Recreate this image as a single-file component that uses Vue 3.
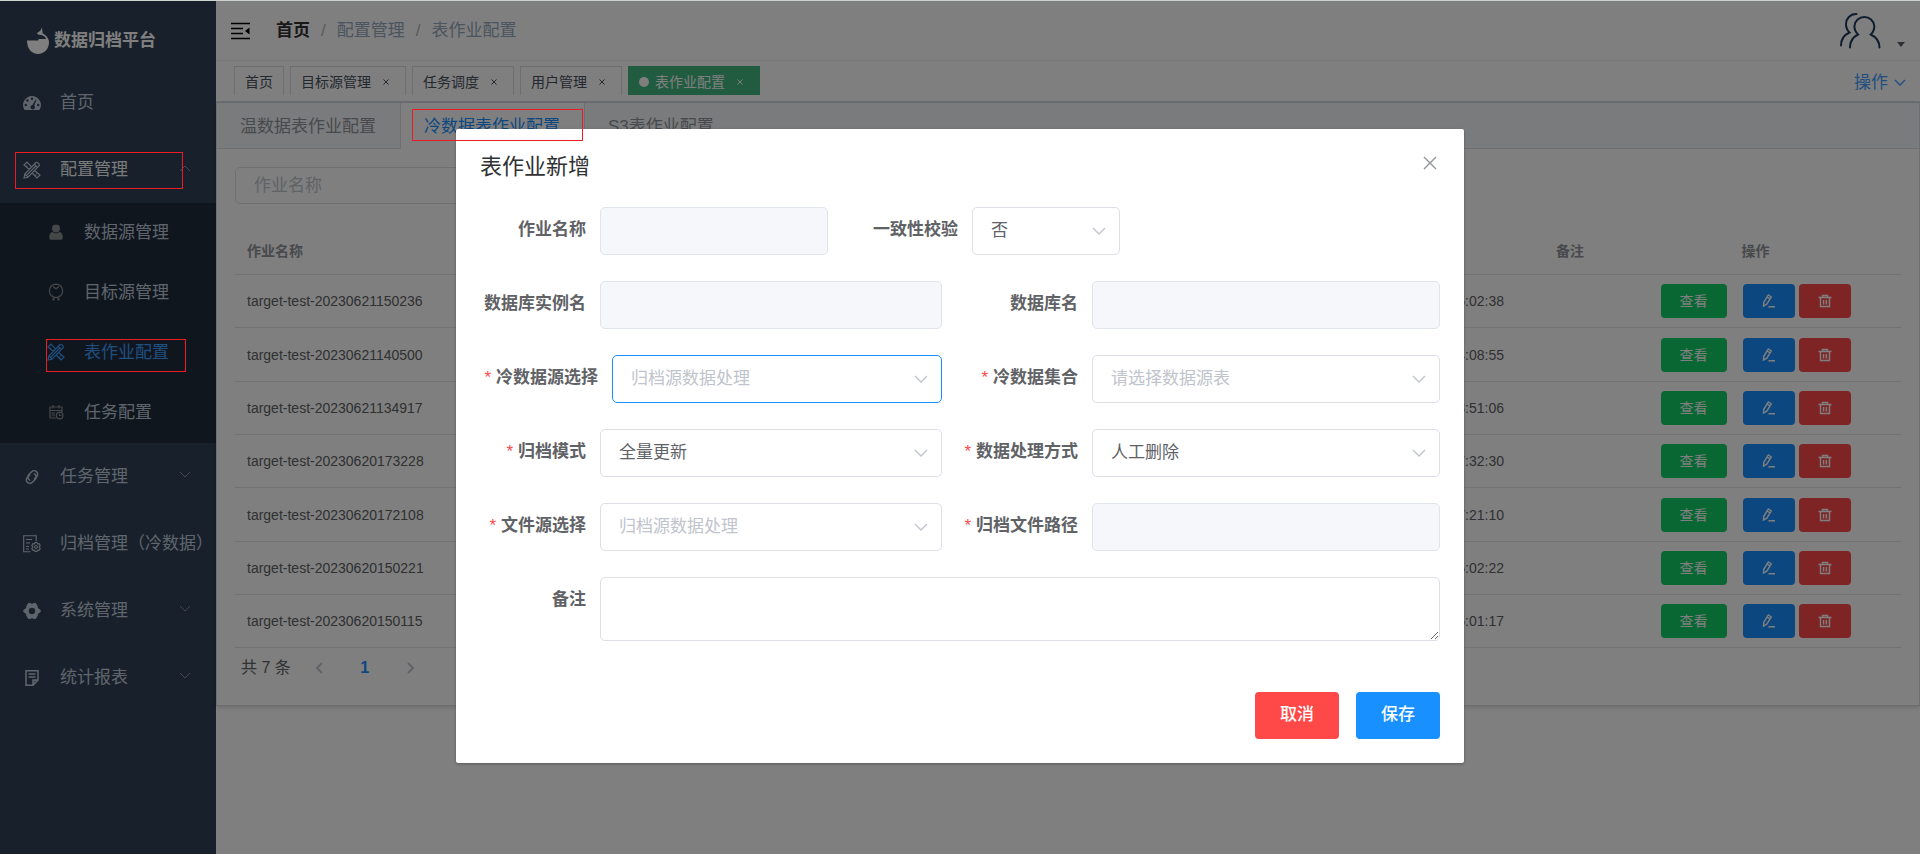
<script setup>
import { ref } from 'vue'

const tags = [
  { name: '首页', closable: false },
  { name: '目标源管理', closable: true },
  { name: '任务调度', closable: true },
  { name: '用户管理', closable: true },
  { name: '表作业配置', closable: true, active: true },
]

const tabs = ['温数据表作业配置', '冷数据表作业配置', 'S3表作业配置']
const activeTab = ref(1)

const rows = [
  { name: 'target-test-20230621150236', time: '2023-06-21 15:02:38' },
  { name: 'target-test-20230621140500', time: '2023-06-21 14:08:55' },
  { name: 'target-test-20230621134917', time: '2023-06-21 13:51:06' },
  { name: 'target-test-20230620173228', time: '2023-06-20 17:32:30' },
  { name: 'target-test-20230620172108', time: '2023-06-20 17:21:10' },
  { name: 'target-test-20230620150221', time: '2023-06-20 15:02:22' },
  { name: 'target-test-20230620150115', time: '2023-06-20 15:01:17' },
]

const form = ref({
  name: '',
  check: 'no',
  instance: '',
  database: '',
  source: '',
  collection: '',
  mode: 'full',
  handle: 'manual',
  file: '',
  path: '',
  remark: '',
})
</script>

<template>
  <div class="page">
    <div class="strip"></div>
    <div class="shell">
      <aside class="sidebar">
        <div class="logo">
          <svg width="24" height="28" viewBox="0 0 24 28" aria-hidden="true">
            <path d="M1 13.500h11.500v-1.500h7.500l-1-3.500c2.700 1.500 4 4 4 7C23 22 18 27 12 27S1 22 1 13.500z" fill="currentColor" />
            <path d="M11 6.500c1.500-2 3-1.500 4.500-5l.5-1 .7 6c2.500.8 5 3.500 5.300 7.500-2-4-5-6-8-6.200-1.500 0-2.300-.3-3-1.300z" fill="currentColor" />
          </svg>
          <span>数据归档平台</span>
        </div>
        <nav>
          <a class="item" href="#home">
            <svg class="icon" viewBox="0 0 18 18" aria-hidden="true">
              <path fill="currentColor" fill-rule="evenodd" d="M9 2a9 9 0 0 0-7.900 13.200c.3.500.6.800 1.200.8h13.400c.6 0 .9-.3 1.200-.8A9 9 0 0 0 9 2zm0 1.500a1.200 1.200 0 1 1 0 2.400 1.200 1.200 0 0 1 0-2.400zM4.500 5.300a1.200 1.200 0 1 1 0 2.400 1.200 1.200 0 0 1 0-2.400zM2.800 9.800a1.200 1.200 0 1 1 0 2.400 1.200 1.200 0 0 1 0-2.400zm12.400 0a1.200 1.200 0 1 1 0 2.400 1.200 1.200 0 0 1 0-2.400zM12.700 5.600l.8.400-2.300 5.600a2.200 2.200 0 1 1-1.700-.6z" />
            </svg>
            <span>首页</span>
          </a>
          <a class="item open" href="#config">
            <svg class="icon" viewBox="0 0 18 18" aria-hidden="true">
              <path fill="none" stroke="currentColor" stroke-width="1.200" d="M6.500 8.500 1 4l3-3 4.800 5.200M11.500 9.500 17 14l-3 3-4.800-5M3 6l1.200-1.200M12 14.800l1.200-1.200M14.500 11.500l-1.200 1.200M1 17l.8-4L13 1.500c1-1 4 2 3.200 3.200L5 16.200zM11.300 3.200l3.400 3.400M3.600 14.300 12.800 5M1.800 13.200 5 16" />
            </svg>
            <span>配置管理</span>
            <svg class="arrow" viewBox="0 0 12 12" aria-hidden="true"><path d="M1 9l5-5 5 5" /></svg>
          </a>
          <div class="sub">
            <a class="subitem" href="#datasource">
              <svg class="icon" viewBox="0 0 18 18" aria-hidden="true">
                <circle cx="9" cy="5.500" r="4" fill="currentColor" />
                <path fill="currentColor" d="M5.500 9c2 1.800 5 1.800 7 0 2 .6 3.200 2 3.200 4.500V15c0 1-.7 1.700-1.700 1.700H4c-1 0-1.700-.7-1.700-1.700v-1.500C2.300 11 3.500 9.600 5.500 9z" />
              </svg>
              <span>数据源管理</span>
            </a>
            <a class="subitem" href="#target">
              <svg class="icon" viewBox="0 0 18 18" aria-hidden="true">
                <path fill="none" stroke="currentColor" stroke-width="1.200" d="M9 1.200a6.700 6.700 0 0 1 2.800 12.700c-1.700.7-3.900.7-5.600 0A6.700 6.700 0 0 1 9 1.200zM6 3.500l3 2.300 3-2.300M7.300 14l-1.300 3.500M5.300 16l2.300 1M10.700 14l1.300 3.500M12.700 16l-2.300 1" />
              </svg>
              <span>目标源管理</span>
            </a>
            <a class="subitem current" href="#job">
              <svg class="icon" viewBox="0 0 18 18" aria-hidden="true">
                <path fill="none" stroke="currentColor" stroke-width="1.200" d="M6.500 8.500 1 4l3-3 4.800 5.200M11.500 9.500 17 14l-3 3-4.800-5M3 6l1.200-1.200M12 14.800l1.200-1.200M14.500 11.500l-1.200 1.200M1 17l.8-4L13 1.500c1-1 4 2 3.200 3.200L5 16.200zM11.300 3.200l3.400 3.400M3.600 14.300 12.800 5M1.800 13.200 5 16" />
              </svg>
              <span>表作业配置</span>
            </a>
            <a class="subitem" href="#task">
              <svg class="icon" viewBox="0 0 18 18" aria-hidden="true">
                <path fill="none" stroke="currentColor" stroke-width="1.200" d="M9 15H3V4h12v5M3 7.500h12M6 2v3.500M12 2v3.500M12.500 10.500v2h2" />
                <circle cx="12.700" cy="12.500" r="3.300" fill="none" stroke="currentColor" stroke-width="1.200" />
                <path fill="currentColor" opacity=".5" d="M4.500 9H8v4.500H4.500z" />
              </svg>
              <span>任务配置</span>
            </a>
          </div>
          <a class="item" href="#tasks">
            <svg class="icon" viewBox="0 0 18 18" aria-hidden="true">
              <g transform="rotate(-45 9 9)">
                <path fill="none" stroke="currentColor" stroke-width="1.500" stroke-linecap="round" d="M8.500 6h-3a3.500 3.500 0 0 0 0 7h4a3.500 3.500 0 0 0 3.300-4.500M9.500 12h3a3.500 3.500 0 0 0 0-7h-4a3.500 3.500 0 0 0-3.300 4.500" />
              </g>
            </svg>
            <span>任务管理</span>
            <svg class="arrow" viewBox="0 0 12 12" aria-hidden="true"><path d="M1 3l5 5 5-5" /></svg>
          </a>
          <a class="item" href="#archive">
            <svg class="icon" viewBox="0 0 18 18" aria-hidden="true">
              <path fill="none" stroke="currentColor" stroke-width="1.100" d="M7.500 16.800H.7V.7h12.500v5.500M3 4.500h6M3 8h4M3 11.500h3M3 14h3" />
              <path fill="none" stroke="currentColor" stroke-width="1.100" d="M12 7.500h2l.5 1.500 1.700-.3 1 1.800-1 1.500 1 1.500-1 1.800-1.700-.3L14 16.500h-2l-.5-1.500-1.700.3-1-1.800 1-1.500-1-1.500 1-1.800 1.700.3z" />
              <circle cx="13" cy="12" r="1.500" fill="none" stroke="currentColor" />
            </svg>
            <span>归档管理（冷数据）</span>
          </a>
          <a class="item" href="#system">
            <svg class="icon" viewBox="0 0 18 18" aria-hidden="true">
              <path fill="currentColor" fill-rule="evenodd" d="M5.300 1h2l1.700 1L10.700 1h2l2 3.200.1 1.800L17 7.500 18 9l-1 1.500-2.200 1.500-.1 1.800-2 3.200h-2L9 16l-1.700 1h-2l-2-3.200-.1-1.800L1 10.500 0 9l1-1.500L3.200 6l.1-1.800zM9 5.800a3.200 3.200 0 1 0 0 6.400 3.200 3.200 0 0 0 0-6.400z" />
            </svg>
            <span>系统管理</span>
            <svg class="arrow" viewBox="0 0 12 12" aria-hidden="true"><path d="M1 3l5 5 5-5" /></svg>
          </a>
          <a class="item" href="#report">
            <svg class="icon" viewBox="0 0 18 18" aria-hidden="true">
              <path fill="none" stroke="currentColor" stroke-width="1.500" d="M3 1.800h12V11l-5 5.300H3zM5.500 5h7M5.500 8h7M10 16v-5h5" />
              <path fill="currentColor" d="M10 11h5l-5 5z" opacity=".5" />
            </svg>
            <span>统计报表</span>
            <svg class="arrow" viewBox="0 0 12 12" aria-hidden="true"><path d="M1 3l5 5 5-5" /></svg>
          </a>
        </nav>
      </aside>

      <main class="main">
        <header class="navbar">
          <button class="toggle" type="button" aria-label="收起菜单">
            <svg width="20" height="18" viewBox="0 0 20 18" aria-hidden="true">
              <path d="M1 1.500h19M1 6.500h12M1 11.500h12M1 16.500h19" stroke="#000" stroke-width="1.600" />
              <path d="M19.500 5.500v7L15 9z" fill="#000" />
            </svg>
          </button>
          <nav class="crumbs">
            <a href="#home">首页</a><i>/</i><span>配置管理</span><i>/</i><span>表作业配置</span>
          </nav>
          <button class="user" type="button" aria-label="用户">
            <svg width="42" height="38" viewBox="0 0 42 38" aria-hidden="true">
              <path fill="none" stroke="#1d3a5c" stroke-width="2" stroke-linecap="round" d="M11 35.500C11 30 14 25 19 22.500 16.500 20 15.400 17.500 15.400 14a10 10 0 0 1 19.900 0c0 3.500-1.300 6.500-3.500 8.500 5.200 2.500 8.700 7.500 8.700 13M17.500 2C11 1.700 7 7 7 12c0 3.500 1.300 6.500 3.500 8.500C5 23 2 28 2 33.500" />
            </svg>
            <svg class="caret" width="10" height="6" viewBox="0 0 10 6" aria-hidden="true"><path d="M1 0h8L5 5z" fill="#5a5e66" /></svg>
          </button>
        </header>

        <div class="tags">
          <span v-for="tag in tags" :key="tag.name" class="tag" :class="{ active: tag.active }">
            <i v-if="tag.active" class="dot"></i>
            <a href="#tag">{{ tag.name }}</a>
            <button v-if="tag.closable" type="button" :aria-label="'关闭' + tag.name">
              <svg width="6" height="6" viewBox="0 0 6 6" aria-hidden="true"><path d="M.5.5l5 5M5.500.5l-5 5" stroke="currentColor" /></svg>
            </button>
          </span>
          <a class="ops" href="#ops">操作
            <svg class="chev" width="12" height="12" viewBox="0 0 12 12" aria-hidden="true"><path d="M1 3l5 5 5-5" /></svg>
          </a>
        </div>

        <section class="card">
          <div class="tabs" role="tablist">
            <button
              v-for="(tab, i) in tabs"
              :key="tab"
              type="button"
              role="tab"
              :aria-selected="i === activeTab"
              :class="{ active: i === activeTab }"
              @click="activeTab = i"
            >{{ tab }}</button>
          </div>
          <div class="body">
            <input class="search" type="text" placeholder="作业名称" aria-label="作业名称" />
            <table>
              <colgroup>
                <col class="c-name" /><col /><col class="c-time" /><col class="c-remark" /><col class="c-ops" />
              </colgroup>
              <thead>
                <tr><th>作业名称</th><th></th><th></th><th>备注</th><th class="mid">操作</th></tr>
              </thead>
              <tbody>
                <tr v-for="row in rows" :key="row.name">
                  <td>{{ row.name }}</td>
                  <td></td>
                  <td>{{ row.time }}</td>
                  <td></td>
                  <td>
                    <div class="acts">
                      <button class="view" type="button">查看</button>
                      <button class="edit" type="button" aria-label="编辑">
                        <svg width="14" height="14" viewBox="0 0 14 14" aria-hidden="true">
                          <path fill="none" stroke="currentColor" stroke-width="1.400" d="M1.500 12l.3-3.700L6.300 1l3 1.900-4.500 7.300zM5 3l3 1.900M6.500 12.800h6.500" />
                        </svg>
                      </button>
                      <button class="del" type="button" aria-label="删除">
                        <svg width="14" height="14" viewBox="0 0 14 14" aria-hidden="true">
                          <path fill="none" stroke="currentColor" stroke-width="1.400" d="M.5 3.500h13M4.500 3.500v-2h5v2M2.500 3.500v9h9v-9M5.600 6v4.500M8.400 6v4.500" />
                        </svg>
                      </button>
                    </div>
                  </td>
                </tr>
              </tbody>
            </table>
            <div class="pager">
              <span>共 7 条</span>
              <button type="button" disabled aria-label="上一页">
                <svg width="8" height="12" viewBox="0 0 8 12" aria-hidden="true"><path d="M7 1L2 6l5 5" /></svg>
              </button>
              <button type="button" class="num">1</button>
              <button type="button" disabled aria-label="下一页">
                <svg width="8" height="12" viewBox="0 0 8 12" aria-hidden="true"><path d="M1 1l5 5-5 5" /></svg>
              </button>
            </div>
          </div>
        </section>
      </main>
    </div>

    <div class="overlay">
      <div class="dialog" role="dialog" aria-labelledby="dlg-title">
        <header class="dlg-head">
          <h2 id="dlg-title">表作业新增</h2>
          <button type="button" aria-label="关闭">
            <svg width="14" height="14" viewBox="0 0 14 14" aria-hidden="true"><path d="M1 1l12 12M13 1L1 13" stroke="#909399" stroke-width="1.400" /></svg>
          </button>
        </header>
        <form class="form" @submit.prevent>
          <div class="row short">
            <div class="field">
              <label for="f-name">作业名称</label>
              <input id="f-name" v-model="form.name" type="text" disabled />
            </div>
            <div class="field">
              <label for="f-check">一致性校验</label>
              <div class="pick">
                <select id="f-check" v-model="form.check"><option value="no">否</option></select>
                <svg class="chev" width="14" height="14" viewBox="0 0 14 14" aria-hidden="true"><path d="M1 4l6 6 6-6" /></svg>
              </div>
            </div>
          </div>
          <div class="row">
            <div class="field">
              <label for="f-inst">数据库实例名</label>
              <input id="f-inst" v-model="form.instance" type="text" disabled />
            </div>
            <div class="field">
              <label for="f-db">数据库名</label>
              <input id="f-db" v-model="form.database" type="text" disabled />
            </div>
          </div>
          <div class="row">
            <div class="field wide">
              <label for="f-src" class="req">冷数据源选择</label>
              <div class="pick">
                <select id="f-src" v-model="form.source" class="empty focus"><option value="">归档源数据处理</option></select>
                <svg class="chev" width="14" height="14" viewBox="0 0 14 14" aria-hidden="true"><path d="M1 4l6 6 6-6" /></svg>
              </div>
            </div>
            <div class="field">
              <label for="f-col" class="req">冷数据集合</label>
              <div class="pick">
                <select id="f-col" v-model="form.collection" class="empty"><option value="">请选择数据源表</option></select>
                <svg class="chev" width="14" height="14" viewBox="0 0 14 14" aria-hidden="true"><path d="M1 4l6 6 6-6" /></svg>
              </div>
            </div>
          </div>
          <div class="row">
            <div class="field">
              <label for="f-mode" class="req">归档模式</label>
              <div class="pick">
                <select id="f-mode" v-model="form.mode"><option value="full">全量更新</option></select>
                <svg class="chev" width="14" height="14" viewBox="0 0 14 14" aria-hidden="true"><path d="M1 4l6 6 6-6" /></svg>
              </div>
            </div>
            <div class="field">
              <label for="f-handle" class="req">数据处理方式</label>
              <div class="pick">
                <select id="f-handle" v-model="form.handle"><option value="manual">人工删除</option></select>
                <svg class="chev" width="14" height="14" viewBox="0 0 14 14" aria-hidden="true"><path d="M1 4l6 6 6-6" /></svg>
              </div>
            </div>
          </div>
          <div class="row">
            <div class="field">
              <label for="f-file" class="req">文件源选择</label>
              <div class="pick">
                <select id="f-file" v-model="form.file" class="empty"><option value="">归档源数据处理</option></select>
                <svg class="chev" width="14" height="14" viewBox="0 0 14 14" aria-hidden="true"><path d="M1 4l6 6 6-6" /></svg>
              </div>
            </div>
            <div class="field">
              <label for="f-path" class="req">归档文件路径</label>
              <input id="f-path" v-model="form.path" type="text" disabled />
            </div>
          </div>
          <div class="field">
            <label for="f-remark">备注</label>
            <textarea id="f-remark" v-model="form.remark"></textarea>
          </div>
          <div class="foot">
            <button class="cancel" type="button">取消</button>
            <button class="save" type="submit">保存</button>
          </div>
        </form>
      </div>
    </div>

    <div class="mark mark-menu"></div>
    <div class="mark mark-sub"></div>
    <div class="mark mark-tab"></div>
  </div>
</template>

<style>
body {
  margin: 0;
}
</style>

<style scoped>
.page,
.page * {
  box-sizing: border-box;
}
.page {
  position: relative;
  display: flex;
  flex-direction: column;
  min-height: 100vh;
  font-family: "Liberation Sans", "Noto Sans CJK SC", sans-serif;
  font-size: 17px;
  line-height: 24px;
  color: #606266;
  background: #fff;
}
button,
input,
select,
textarea {
  font: inherit;
  margin: 0;
}
button {
  padding: 0;
  border: 0;
  background: none;
  color: inherit;
}
a {
  color: inherit;
  text-decoration: none;
}
i {
  font-style: normal;
}
svg {
  display: block;
  flex: none;
}
.strip {
  height: 1px;
  background: #cdd4d0;
}
.shell {
  flex: 1;
  display: flex;
}

.sidebar {
  width: 216px;
  flex: none;
  background: #304156;
  color: #bfcbd9;
}
.logo {
  display: flex;
  align-items: center;
  gap: 4px;
  height: 68px;
  padding: 12px 0 0 26px;
  color: #fff;
  font-weight: bold;
}
.item,
.subitem {
  display: flex;
  align-items: center;
  white-space: nowrap;
}
.item {
  height: 67px;
  padding-left: 23px;
  gap: 19px;
}
.item.open {
  color: #f4f4f5;
}
.item.open .icon {
  color: #bfcbd9;
}
.subitem {
  height: 60px;
  padding-left: 47px;
  gap: 19px;
}
.sub {
  background: #1f2d3d;
}
.icon {
  width: 18px;
  height: 18px;
}
.subitem .icon {
  margin-bottom: 2px;
  color: #8b8e93;
}
.subitem.current,
.subitem.current .icon {
  color: #409eff;
}
.arrow {
  width: 12px;
  height: 12px;
  margin: 0 25px 4px auto;
  fill: none;
  stroke: #909399;
}

.main {
  flex: 1;
  min-width: 0;
}
.navbar {
  display: flex;
  align-items: center;
  height: 60px;
  padding: 0 14px;
  border-bottom: 1px solid #f0f1f3;
}
.crumbs {
  display: flex;
  flex: 1;
  margin-left: 26px;
  color: #97a8be;
}
.crumbs a {
  color: #303133;
  font-weight: bold;
}
.crumbs i {
  margin: 0 11px;
  color: #b0b4bd;
}
.user {
  display: flex;
  align-items: flex-end;
  gap: 15px;
}
.caret {
  margin-bottom: 2px;
}

.tags {
  display: flex;
  align-items: flex-start;
  gap: 6px;
  height: 42px;
  padding: 5px 14px 0 18px;
  border-bottom: 2px solid #d8dce5;
}
.tag {
  display: flex;
  align-items: center;
  height: 29px;
  padding: 2px 10px 0;
  border: 1px solid #d8dce5;
  border-bottom: 0;
  font-size: 14px;
  color: #495060;
}
.tag.active {
  background: #42b983;
  border-color: #42b983;
  color: #fff;
}
.tag button {
  display: grid;
  place-items: center;
  width: 18px;
  height: 18px;
  margin-left: 6px;
}
.dot {
  width: 10px;
  height: 10px;
  margin-right: 6px;
  border-radius: 50%;
  background: #fff;
}
.ops {
  display: flex;
  align-items: center;
  gap: 6px;
  height: 34px;
  margin-left: auto;
  color: #409eff;
}
.chev {
  fill: none;
  stroke: #c0c4cc;
  stroke-width: 1.400;
}
.ops .chev {
  stroke: #409eff;
}

.card {
  border: 1px solid #dcdfe6;
  border-top: 0;
  box-shadow: 0 2px 4px rgba(0, 0, 0, 0.12), 0 0 6px rgba(0, 0, 0, 0.04);
}
.tabs {
  display: flex;
  height: 46px;
  background: #f5f7fa;
  border-bottom: 1px solid #dcdfe6;
}
.tabs button {
  height: 46px;
  padding: 2px 24px 0 23px;
  color: #909399;
}
.tabs button.active {
  background: #fff;
  border: solid #dcdfe6;
  border-width: 0 1px;
  color: #1890ff;
}
.body {
  padding: 18px;
}
.search {
  display: block;
  width: 240px;
  height: 37px;
  padding: 0 18px;
  border: 1px solid #dcdfe6;
  border-radius: 5px;
  background: #fff;
}
.search::placeholder {
  color: #c0c4cc;
}
table {
  width: 100%;
  margin-top: 23px;
  border-collapse: separate;
  border-spacing: 0;
  table-layout: fixed;
  font-size: 14px;
}
th,
td {
  height: 53px;
  padding: 0 12px;
  border-bottom: 1px solid #dfe6ec;
  text-align: left;
  white-space: nowrap;
}
th {
  height: 48px;
  color: #909399;
}
tbody tr:nth-child(3n + 2) td {
  height: 54px;
}
.mid {
  text-align: center;
}
.c-name {
  width: 240px;
}
.c-time {
  width: 182px;
}
.c-remark {
  width: 66px;
}
.c-ops {
  width: 291px;
}
.acts {
  display: flex;
  justify-content: center;
  gap: 4px;
}
.acts button {
  display: grid;
  place-items: center;
  width: 52px;
  height: 34px;
  border-radius: 4px;
  color: #fff;
}
.acts .view {
  width: 66px;
  margin-right: 12px;
  background: #13ce66;
}
.acts .edit {
  background: #1890ff;
}
.acts .del {
  background: #ff4949;
}
.pager {
  display: flex;
  align-items: center;
  gap: 10px;
  height: 39px;
  padding-left: 6px;
  font-size: 16px;
}
.pager button {
  display: grid;
  place-items: center;
  width: 36px;
  height: 34px;
}
.pager svg {
  fill: none;
  stroke: #c0c4cc;
  stroke-width: 2;
}
.pager .num {
  color: #1890ff;
  font-weight: bold;
}

.overlay {
  position: absolute;
  inset: 1px 0 0;
  padding: 128px 24px 0;
  background: rgba(0, 0, 0, 0.5);
}
.dialog {
  max-width: 1008px;
  margin: 0 auto;
  border-radius: 2px;
  background: #fff;
  box-shadow: 0 1px 3px rgba(0, 0, 0, 0.3);
}
.dlg-head {
  display: flex;
  align-items: center;
  justify-content: space-between;
  padding: 22px 27px 0 24px;
}
.dlg-head h2 {
  margin: 0;
  font-size: 22px;
  line-height: 32px;
  font-weight: normal;
  color: #303133;
}
.dlg-head button {
  height: 24px;
  display: flex;
  align-self: flex-start;
  align-items: center;
}
.form {
  display: flex;
  flex-direction: column;
  gap: 26px;
  padding: 24px 24px;
}
.row {
  display: grid;
  grid-template-columns: 462fr 468fr;
  gap: 30px;
}
.row.short {
  grid-template-columns: 348px 268px;
  gap: 24px;
}
.field {
  display: grid;
  grid-template-columns: 120px minmax(0, 1fr);
}
.field.wide {
  grid-template-columns: 132px minmax(0, 1fr);
}
.field label {
  display: flex;
  justify-content: flex-end;
  padding-right: 14px;
  line-height: 46px;
  white-space: nowrap;
  font-weight: bold;
}
.req::before {
  content: "*";
  margin-right: 5px;
  color: #ff4949;
  font-weight: normal;
}
.field input,
.field select,
.field textarea {
  display: block;
  width: 100%;
  height: 48px;
  padding: 0 18px;
  border: 1px solid #dcdfe6;
  border-radius: 5px;
  background: #fff;
  color: #606266;
  outline: 0;
}
.field input:disabled {
  background: #f5f7fa;
  border-color: #dfe4ed;
}
.field select {
  appearance: none;
}
.field select.empty {
  color: #c0c4cc;
}
.field select.focus {
  border-color: #1890ff;
}
.field textarea {
  height: 64px;
  padding: 6px 18px;
  resize: vertical;
}
.pick {
  position: relative;
}
.pick .chev {
  position: absolute;
  top: 17px;
  right: 14px;
  pointer-events: none;
}
.foot {
  display: flex;
  justify-content: flex-end;
  gap: 17px;
  padding-top: 25px;
}
.foot button {
  width: 84px;
  height: 47px;
  padding-bottom: 2px;
  border-radius: 4px;
  color: #fff;
  font-weight: 500;
}
.cancel {
  background: #ff4949;
}
.save {
  background: #1890ff;
}

.mark {
  position: absolute;
  border: 1px solid #ed1c24;
  pointer-events: none;
}
.mark-menu {
  top: 152px;
  left: 15px;
  width: 168px;
  height: 37px;
}
.mark-sub {
  top: 339px;
  left: 46px;
  width: 140px;
  height: 33px;
}
.mark-tab {
  top: 109px;
  left: 412px;
  width: 171px;
  height: 32px;
}
</style>
